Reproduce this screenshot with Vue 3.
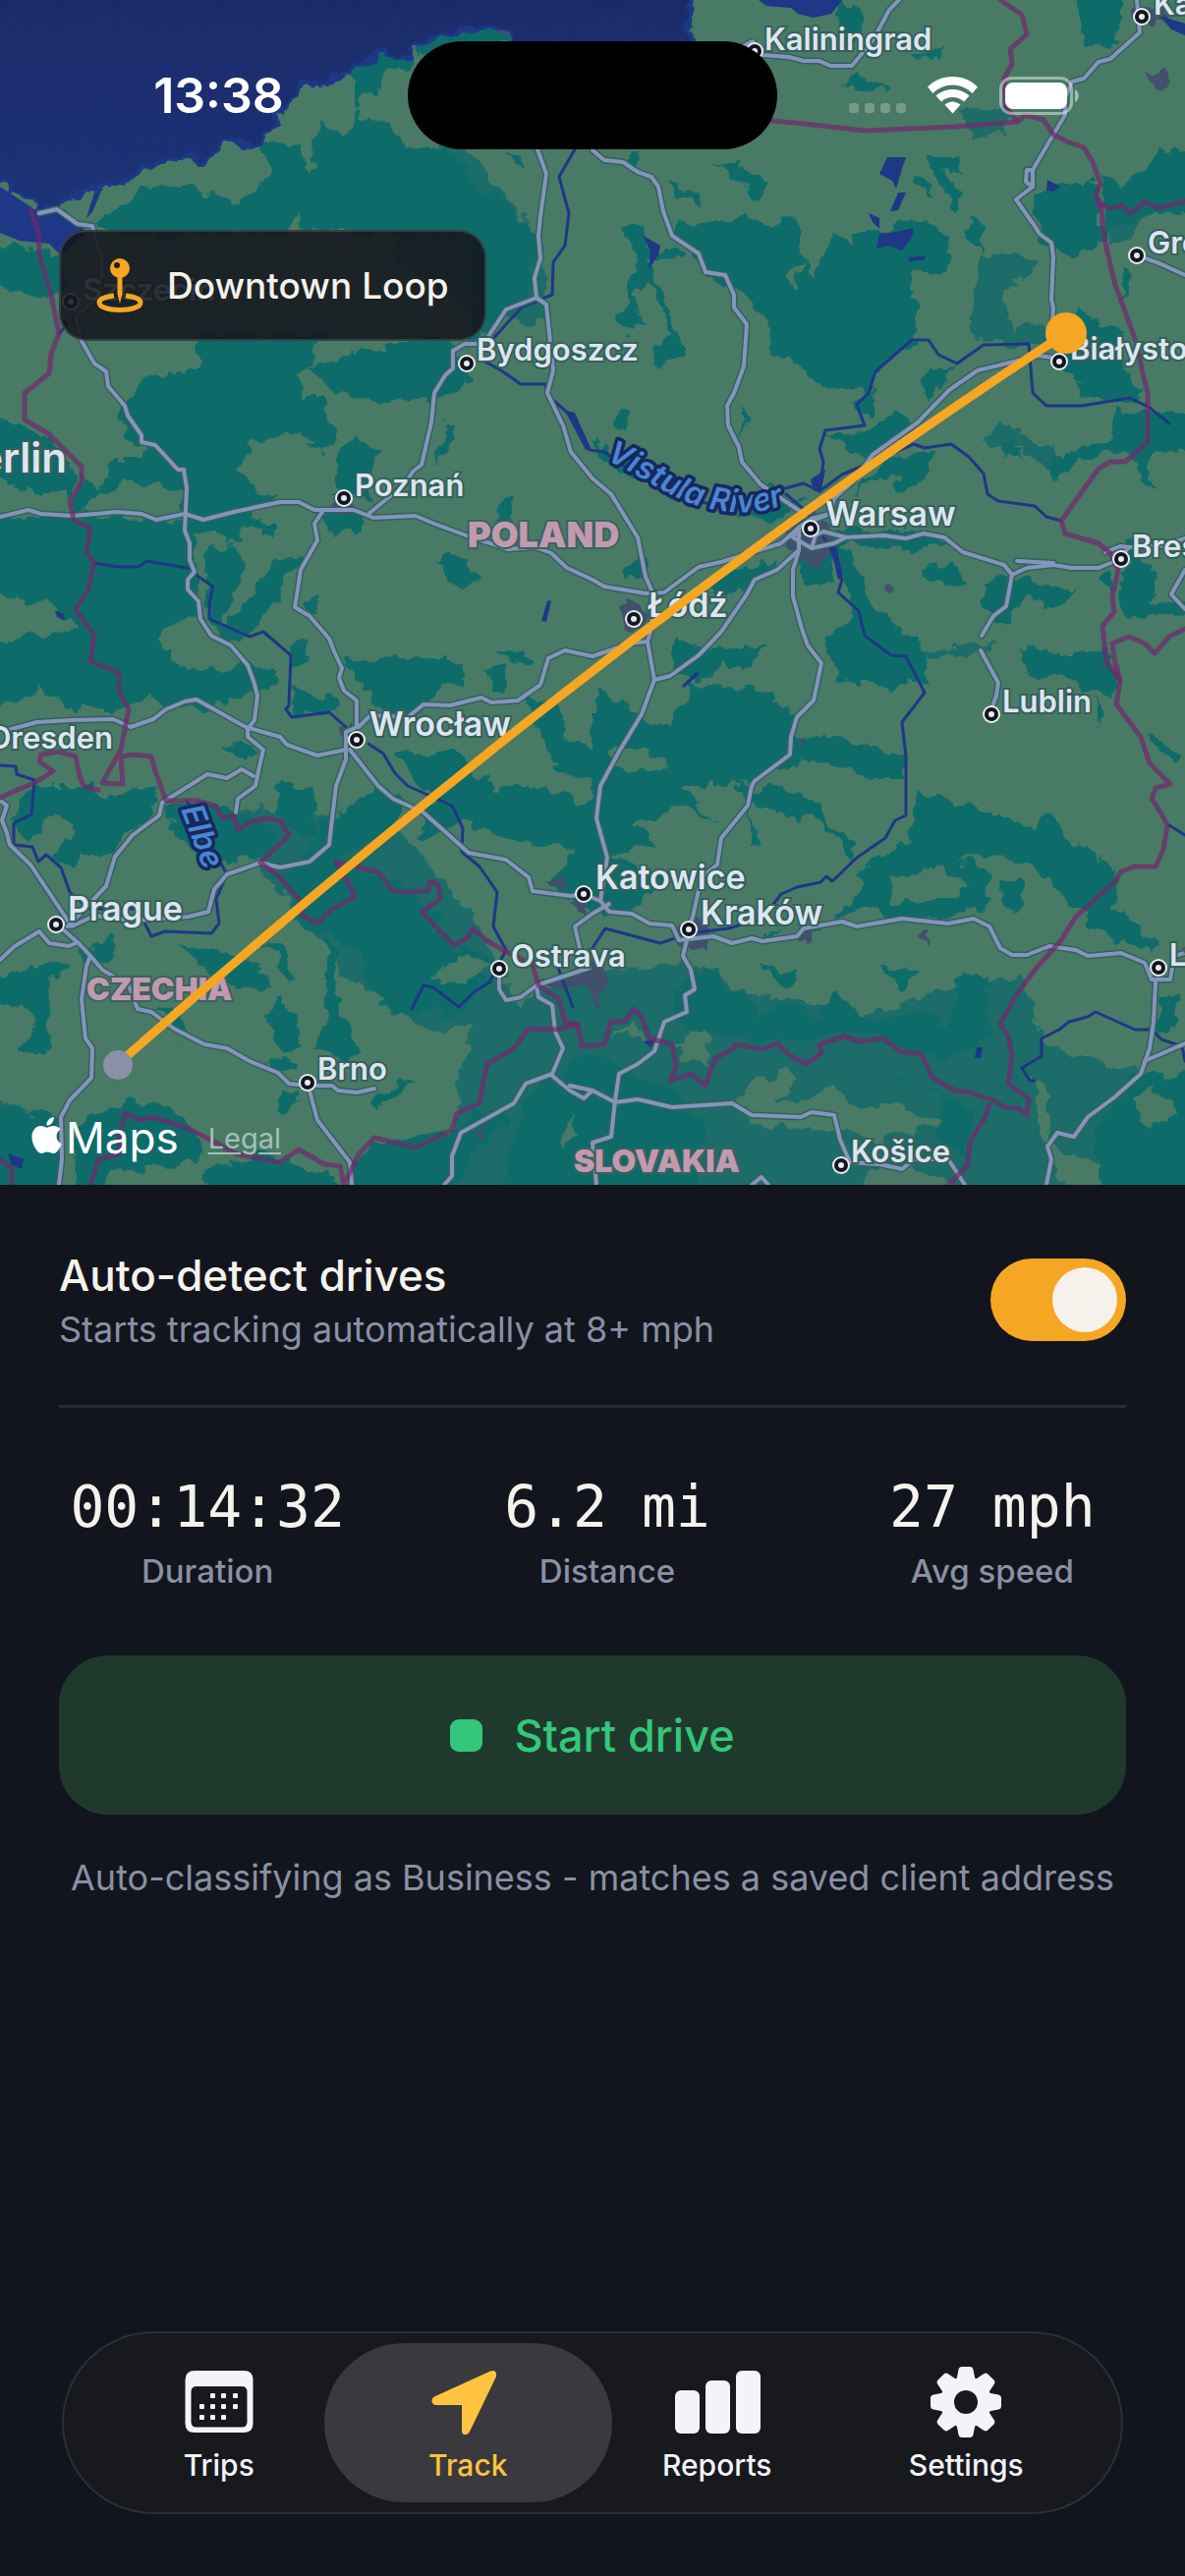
<template>
  <div class="screen">
    <section class="map">
      <svg class="map-canvas" viewBox="0 0 1206 1206" role="img" aria-label="Route map">
        <defs>
          <filter id="rough" filterUnits="userSpaceOnUse" x="-40" y="-40" width="1286" height="1286">
            <feTurbulence type="fractalNoise" baseFrequency="0.05" numOctaves="3" seed="7" />
            <feDisplacementMap in="SourceGraphic" scale="22" xChannelSelector="R" yChannelSelector="G" />
          </filter>
          <linearGradient id="sea" x1="0" y1="0" x2="0" y2="1">
            <stop offset="0" stop-color="#192b68" />
            <stop offset="1" stop-color="#1d3178" />
          </linearGradient>
          <path id="vistula" d="M616 468C650 482 680 506 708 514S770 528 812 508" />
          <path id="elbe" d="M184 824L210 892" />
        </defs>

        <rect width="1206" height="1206" fill="#487a66" />
        <g filter="url(#rough)">
          <polygon v-for="(p, i) in hills" :key="'h' + i" :points="p" fill="#1a6c69" />
          <polygon v-for="(p, i) in forests" :key="'f' + i" :points="p" fill="#0b6c6b" />
          <polygon v-for="(p, i) in clearings" :key="'c' + i" :points="p" fill="#487a66" />
          <polygon v-for="(p, i) in towns" :key="'t' + i" :points="p" fill="#424f6d" />
          <polygon :points="coast" fill="url(#sea)" stroke="#1e3786" stroke-width="5" />
        </g>
        <polygon v-for="(p, i) in lakes" :key="'l' + i" :points="p" fill="#1e3786" />

        <g fill="none" stroke-linejoin="round" stroke-linecap="round">
          <polyline v-for="(p, i) in rivers" :key="'r' + i" :points="p" stroke="#1e3786" stroke-width="3" />
          <polyline v-for="(p, i) in roads" :key="'a' + i" :points="p" stroke="#36605f" stroke-width="7" />
          <polyline v-for="(p, i) in roads" :key="'b' + i" :points="p" stroke="#8495bb" stroke-width="4" />
          <polyline v-for="(p, i) in borders" :key="'d' + i" :points="p" stroke="#73276d" stroke-opacity=".7" stroke-width="5" />
        </g>

        <g v-for="c in cities" :key="c.name">
          <template v-if="c.dot">
            <circle :cx="c.dot[0]" :cy="c.dot[1]" r="9" fill="#e6ebf3" />
            <circle :cx="c.dot[0]" :cy="c.dot[1]" r="7" fill="#14161d" />
            <circle :cx="c.dot[0]" :cy="c.dot[1]" r="3" fill="#e6ebf3" />
          </template>
          <text class="city" :class="c.kind" :x="c.x" :y="c.y">{{ c.name }}</text>
        </g>
        <text v-for="c in countries" :key="c.name" class="country" :class="c.kind" :x="c.x" :y="c.y">{{ c.name }}</text>
        <text class="river"><textPath href="#vistula">Vistula River</textPath></text>
        <text class="river"><textPath href="#elbe">Elbe</textPath></text>

        <path d="M120 1083Q620 642 1085 339" fill="none" stroke="#f5a623" stroke-width="9" />
        <circle cx="120" cy="1084" r="15" fill="#8a90a5" />
        <circle cx="1085" cy="339" r="21" fill="#f5a623" />
      </svg>

      <header class="status">
        <time class="clock">13:38</time>
        <div class="island"></div>
        <div class="signals">
          <svg width="58" height="38" viewBox="0 0 58 38" fill="#fff" fill-opacity=".25">
            <rect v-for="n in 4" :key="n" :x="(n - 1) * 16" y="27" width="10" height="10" rx="3" />
          </svg>
          <svg width="51" height="38" viewBox="0 0 51 38" fill="#fff">
            <path d="M25.500 0C35.500 0 44.500 4 51 10.500L45.500 17C40 11.500 33 8.500 25.500 8.500S11 11.500 5.500 17L0 10.500C6.500 4 15.500 0 25.500 0Z" />
            <path d="M25.500 13C32 13 38 15.500 42.500 19.500L37 25.500C34 22.500 30 21 25.500 21S17 22.500 14 25.500L8.500 19.500C13 15.500 19 13 25.500 13Z" />
            <path d="M25.500 25.500C28.500 25.500 31.500 27 33.500 28.500L25.500 37.500L17.500 28.500C19.500 27 22.500 25.500 25.500 25.500Z" />
          </svg>
          <svg width="82" height="39" viewBox="0 0 82 39">
            <rect x="1.500" y="1.500" width="72" height="36" rx="11" fill="none" stroke="#fff" stroke-opacity=".45" stroke-width="3" />
            <rect x="6" y="6" width="63" height="27" rx="8" fill="#fff" />
            <path d="M77 13c5 2 5 11 0 13z" fill="#fff" fill-opacity=".5" />
          </svg>
        </div>
      </header>

      <div class="chip">
        <svg width="48" height="56" viewBox="0 0 48 56">
          <path d="M18 38C9 39 3 41.500 3 45C3 49.500 12 52.500 24 52.500S45 49.500 45 45C45 41.500 39 39 30 38" fill="none" stroke="#f5a623" stroke-width="5" />
          <path d="M21.500 18h5v18L24 46l-2.500-10z" fill="#f5a623" />
          <circle cx="24" cy="10" r="10" fill="#f5a623" />
          <circle cx="21" cy="7" r="3" fill="#18211f" />
        </svg>
        <span>{{ routeName }}</span>
      </div>

      <footer class="attribution">
        <span class="brand">
          <svg width="31" height="37" viewBox="2 0 20 24" fill="#fff">
            <path d="M12.152 6.896c-.948 0-2.415-1.078-3.960-1.040-2.040.027-3.910 1.183-4.961 3.014-2.117 3.675-.546 9.103 1.519 12.090 1.013 1.454 2.208 3.090 3.792 3.039 1.520-.065 2.090-.987 3.935-.987 1.831 0 2.350.987 3.960.948 1.637-.026 2.676-1.480 3.676-2.948 1.156-1.688 1.636-3.325 1.662-3.415-.039-.013-3.182-1.221-3.220-4.857-.026-3.040 2.480-4.494 2.597-4.559-1.429-2.090-3.623-2.324-4.390-2.376-2-.156-3.675 1.090-4.610 1.090zM15.530 3.830c.843-1.012 1.400-2.427 1.245-3.830-1.207.052-2.662.805-3.532 1.818-.780.896-1.454 2.338-1.273 3.714 1.338.104 2.715-.688 3.559-1.701" />
          </svg>
          Maps
        </span>
        <a href="#legal">Legal</a>
      </footer>
    </section>

    <main class="panel">
      <div class="setting">
        <label for="auto-detect">
          <span class="setting-title">Auto-detect drives</span>
          <span class="setting-hint">Starts tracking automatically at 8+ mph</span>
        </label>
        <input id="auto-detect" v-model="autoDetect" class="switch" type="checkbox" />
      </div>

      <dl class="stats">
        <div v-for="s in stats" :key="s.label" class="stat">
          <dt>{{ s.label }}</dt>
          <dd>{{ s.value }}</dd>
        </div>
      </dl>

      <button class="start" type="button">
        <span class="start-mark"></span>
        Start drive
      </button>
      <p class="note">Auto-classifying as Business - matches a saved client address</p>
    </main>

    <nav class="tabs">
      <button
        v-for="t in tabs"
        :key="t"
        type="button"
        class="tab"
        :class="{ active: t === activeTab }"
        @click="activeTab = t"
      >
        <svg v-if="t === 'Trips'" width="88" height="72" viewBox="0 0 88 72" fill="currentColor">
          <path fill-rule="evenodd" d="M19 4h50q9.500 0 9.500 9.500v44q0 9.500-9.500 9.500h-50q-9.500 0-9.500-9.500v-44q0-9.500 9.500-9.500zM21 20q-5.500 0-5.500 5.500v30.500q0 5.500 5.500 5.500h46q5.500 0 5.500-5.500v-30.500q0-5.500-5.500-5.500z" />
          <rect v-for="d in calendarDots" :key="d.join()" :x="d[0]" :y="d[1]" width="5" height="5" rx="1" />
        </svg>
        <svg v-else-if="t === 'Track'" width="88" height="72" viewBox="3 0 88 72" fill="currentColor">
          <path d="M70 4.500Q77 2 76 10L49 66Q47 70 44 69Q41 69 41 65V39H15Q11 39 10.500 35Q10 32 14 30Z" />
        </svg>
        <svg v-else-if="t === 'Reports'" width="88" height="72" viewBox="0 0 88 72" fill="currentColor">
          <rect x="1" y="24" width="25" height="44" rx="6" />
          <rect x="32" y="14" width="25" height="54" rx="6" />
          <rect x="63" y="4" width="25" height="64" rx="6" />
        </svg>
        <svg v-else width="88" height="72" viewBox="-8 0 88 72" fill="currentColor">
          <circle cx="36" cy="36" r="19" fill="none" stroke="currentColor" stroke-width="14" />
          <path
            v-for="n in 8"
            :key="n"
            d="M32 0h8q3 0 3.500 3l2 10h-19l2-10q.5-3 3.500-3z"
            :transform="`rotate(${n * 45} 36 36)`"
          />
        </svg>
        <span>{{ t }}</span>
      </button>
    </nav>
  </div>
</template>

<script setup>
import { ref } from 'vue'

const routeName = ref('Downtown Loop')
const autoDetect = ref(true)
const activeTab = ref('Track')

const tabs = ['Trips', 'Track', 'Reports', 'Settings']

const stats = ref([
  { label: 'Duration', value: '00:14:32' },
  { label: 'Distance', value: '6.2 mi' },
  { label: 'Avg speed', value: '27 mph' }
])

const calendarDots = [
  [35, 27], [46, 27], [58, 27],
  [24, 38], [35, 38], [46, 38], [58, 38],
  [24, 49], [35, 49], [46, 49]
]

// map labels, in map units
const cities = [
  { name: 'Kaliningrad', dot: [768, 52], x: 778, y: 51 },
  { name: 'Kaunas', dot: [1162, 17], x: 1174, y: 15 },
  { name: 'Grodno', dot: [1157, 260], x: 1168, y: 258 },
  { name: 'Białystok', dot: [1078, 368], x: 1089, y: 366 },
  { name: 'Bydgoszcz', dot: [475, 370], x: 485, y: 367 },
  { name: 'Szczecin', dot: [72, 307], x: 84, y: 306 },
  { name: 'Poznań', dot: [350, 507], x: 361, y: 505 },
  { name: 'Warsaw', dot: [825, 538], x: 840, y: 535, kind: 'large' },
  { name: 'Łódź', dot: [645, 630], x: 659, y: 628, kind: 'large' },
  { name: 'Lublin', dot: [1009, 727], x: 1020, y: 725 },
  { name: 'Brest', dot: [1141, 569], x: 1152, y: 567 },
  { name: 'Wrocław', dot: [363, 753], x: 376, y: 749, kind: 'large' },
  { name: 'Prague', dot: [57, 941], x: 69, y: 937, kind: 'large' },
  { name: 'Brno', dot: [313, 1102], x: 323, y: 1099 },
  { name: 'Katowice', dot: [594, 910], x: 606, y: 905, kind: 'large' },
  { name: 'Kraków', dot: [701, 946], x: 713, y: 941, kind: 'large' },
  { name: 'Ostrava', dot: [508, 986], x: 520, y: 984 },
  { name: 'Košice', dot: [856, 1186], x: 866, y: 1183 },
  { name: 'Lviv', dot: [1179, 985], x: 1190, y: 983 },
  { name: 'Dresden', x: 115, y: 762, kind: 'end' },
  { name: 'Berlin', x: 68, y: 481, kind: 'capital' }
]

const countries = [
  { name: 'POLAND', x: 476, y: 557, kind: 'large' },
  { name: 'CZECHIA', x: 88, y: 1018 },
  { name: 'SLOVAKIA', x: 584, y: 1193 }
]

const coast = '-40,-40 706,-40 705,3 702,25 707,60 526,60 526,42 519,30 469,30 427,43 419,60 404,60 392,50 369,67 350,78 308,88 288,110 269,133 265,145 242,144 204,160 158,167 127,182 94,193 65,207 40,217 35,213 23,197 -40,170'

const lakes = [
  '0,190 35,213 40,216 65,213 84,230 86,238 62,260 50,248 20,245 0,237',
  '772,0 857,0 846,14 828,18 812,14 805,8 780,6',
  '96,196 104,192 94,216 88,222',
  '903,160 922,160 918,172 912,192 908,184 895,177',
  '895,238 912,236 930,232 928,242 918,255 905,250 892,253',
  '884,217 895,222 895,233 888,226',
  '914,196 922,196 914,214 906,215',
  '925,262 942,260 940,265 930,265 925,267',
  '655,240 672,250 670,260 660,274 662,258',
  '1066,183 1079,190 1072,195 1065,194',
  '1180,16 1206,24 1206,36 1192,30',
  '557,612 561,611 556,633 551,632',
  '708,684 712,686 696,700 694,698',
  '56,621 65,625 66,632 58,628',
  '655,1060 668,1058 662,1066',
  '994,1066 1000,1066 998,1077 992,1077',
  '8,1174 24,1180 22,1190 12,1186',
  '845,553 850,550 858,588 853,590',
  '825,488 840,478 836,498 828,500',
  '575,418 585,420 602,458 596,458'
]

const hills = [
  '999,260 1030,257 1057,267 1022,297 1026,327 1065,333 1065,350 995,350 991,303',
  '410,160 470,140 500,190 545,230 560,330 480,320 400,260',
  '976,113 1030,108 1026,137 991,140',
  '1141,190 1240,160 1240,225 1180,215 1130,250',
  '240,820 400,840 480,930 540,1040 440,1050 370,1010 300,930 265,880',
  '481,1040 603,990 700,980 760,1010 880,1030 1040,990 1060,1060 1240,1120 1240,1240 360,1240 385,1163 458,1153',
  '-30,1110 40,1135 60,1240 -30,1240',
  '1020,430 1070,455 1090,480 1060,475 1030,450 1003,450',
  '930,665 1010,655 1000,668 940,668'
]

const forests = [
  '362,80 362,127 346,135 323,127 315,173 304,150 265,143 277,170 242,210 231,200 173,203 173,240 235,235 290,240 305,215 312,235 481,240 540,228 504,200 485,197 469,167 454,153 415,153 400,123 369,120 362,110 388,87 392,70 419,67 427,43 392,50 369,67 354,78',
  '469,30 519,28 526,45 470,45 430,60 427,43',
  '480,230 542,228 546,267 535,300 500,333 480,350',
  '140,195 190,190 225,200 170,240 110,235 95,225',
  '-30,237 62,260 75,290 38,307 -30,270',
  '200,340 335,340 300,380 308,400 323,400 327,423 346,443 342,457 277,450 246,463 238,477 258,497 285,510 250,520 270,527 270,533 190,545 185,500 130,490 77,523 80,480 100,500 110,470 140,470 150,455 115,430 140,395 160,383 200,375',
  '310,370 380,355 450,345 480,370 470,400 400,410 340,400',
  '-30,420 25,430 75,475 70,510 60,500 40,505 20,500 -30,460',
  '77,523 -30,527 -30,600 50,613 80,640 30,650 -30,655 -30,726 25,715 40,697 58,713 70,722 127,722 150,707 173,722 215,720 254,710 277,697 281,683 250,677 200,683 165,660 165,640 207,630 200,580 193,535',
  '208,560 240,557 250,580 225,633 240,630 270,585 280,570 312,563 290,590 287,605 265,635 245,650 225,655 210,600',
  '225,540 245,535 248,553 232,555',
  '266,530 280,530 280,548 268,546',
  '327,523 365,520 370,537 340,547',
  '365,443 388,463 372,490 382,510 345,500 344,462',
  '455,430 465,430 455,460 440,470',
  '515,505 525,505 520,525 505,535',
  '446,567 475,567 478,583 490,593 465,595',
  '312,610 326,605 322,625 314,622',
  '296,657 314,657 312,672 298,680',
  '350,673 450,670 470,680 468,693 450,700 425,732 400,725 390,740 375,700 360,695',
  '296,695 318,708 345,710 348,722 320,725 298,722',
  '500,660 543,670 538,677 515,675',
  '496,680 515,680 515,700 500,697',
  '535,710 569,715 573,750 603,763 620,800 570,785 550,755',
  '415,767 460,765 480,785 520,810 440,810 400,770',
  '227,760 246,755 262,763 250,775',
  '691,230 726,227 738,233 757,217 784,233 791,217 811,223 813,253 830,283 849,233 865,253 868,237 891,237 922,223 949,230 966,240 965,277 930,277 930,333 934,347 911,360 891,377 884,400 834,393 811,367 788,360 784,330 757,300 741,287 718,280 711,260 688,240',
  '1057,193 1076,187 1118,187 1118,230 1130,240 1091,262 1072,250 1057,240 1049,213',
  '1122,173 1141,190 1180,150 1240,165 1240,225 1180,215 1145,228 1126,245',
  '1141,270 1153,283 1145,310',
  '1091,-30 1141,-30 1141,30 1130,53 1103,43',
  '988,223 999,230 999,257 982,240',
  '726,167 757,167 780,193 765,203 749,180',
  '680,183 707,193 715,210 695,200',
  '634,233 653,227 657,253 699,257 695,262 661,267 695,347 695,367 666,373 668,347 684,343 661,283 645,300 657,333 641,340 626,323 638,300 650,270',
  '849,3 872,3 880,20 868,53 853,30',
  '947,160 972,160 978,177 961,177 980,200 974,213 947,175',
  '935,178 945,190 955,205 935,192',
  '857,83 888,78 907,93 872,90',
  '930,55 958,45 956,62',
  '520,155 532,160 530,172 522,168',
  '640,155 652,155 650,175 642,172',
  '945,370 970,375 955,400 940,410',
  '1080,350 1095,310 1115,327 1141,337 1145,370 1150,400 1115,390 1080,377',
  '1095,385 1160,395 1160,410 1100,405',
  '749,527 776,497 818,510 784,533',
  '600,450 640,470 700,500 690,505 640,490',
  '841,440 872,443 922,420 926,440 888,467 872,463',
  '868,410 890,395 888,420 875,425',
  '934,460 953,460 949,480 918,503 911,483 895,487 872,500 900,470',
  '830,540 934,540 965,550 922,560 857,553 872,587 895,620 945,670 941,693 895,700 853,690 838,653 868,630 865,600 849,567 849,597 815,593 815,567',
  '938,580 972,577 988,590 976,597 949,593',
  '1003,593 1045,587 1068,597 1095,597 1076,617 1041,613 1018,633 999,617',
  '1134,417 1195,420 1240,433 1240,457 1176,460 1168,487 1176,500 1161,490 1157,467 1130,460 1099,463 1072,490 1072,467 1134,443',
  '1020,450 1030,447 1041,463 1022,467',
  '1038,660 1049,663 1130,663 1141,690 1134,707 1103,703 1084,690 1057,690 1041,677',
  '1118,587 1130,583 1130,607',
  '1149,550 1180,587 1165,610 1240,613 1240,630 1150,627 1138,613',
  '1115,710 1125,725 1118,740',
  '1168,743 1199,770 1195,775 1172,757',
  '688,653 726,663 780,655 757,683 734,677 718,690 691,690',
  '630,575 660,570 655,590 635,590',
  '730,580 790,575 765,600 730,605',
  '603,700 641,720 665,737 684,737 703,695 735,700 757,697 800,720 811,747 868,753 922,773 918,787 872,787 818,770 795,787 749,800 603,800',
  '626,417 641,417 643,430 634,440',
  '752,413 766,426 758,438',
  '35,800 92,800 100,810 161,800 154,833 127,850 115,867 81,867 77,883 38,867 20,850 10,830',
  '169,817 215,817 265,833 285,853 265,877 215,880 192,867 173,830',
  '277,800 319,800 323,817 319,853 292,843',
  '385,800 415,820 400,843 342,877 385,890 423,910 450,933 442,953 504,977 481,987 500,1000 462,1033 431,1030 404,1033 369,1000 365,967 342,953 315,947 290,905 277,885 300,890 327,840',
  '446,800 538,800 603,820 603,867 538,857 473,837 427,853 435,830',
  '331,953 342,970 346,1030 365,1070 350,1078 320,1070 331,1033',
  '288,1013 304,1040 308,1070 281,1063 265,1033',
  '270,955 288,965 302,1000 290,990',
  '185,963 258,977 277,1010 254,1007 215,993',
  '23,987 65,977 54,1000 46,1073 19,1073 35,1050 31,1027 -30,1013 -30,1000',
  '80,965 115,955 110,975 90,985',
  '160,1030 175,1020 195,1045 185,1060',
  '265,1082 290,1072 306,1090 280,1092',
  '284,1110 304,1107 300,1123 286,1130',
  '408,1100 423,1100 385,1127 377,1120',
  '-30,1120 31,1133 62,1140 60,1240 -30,1240',
  '96,1133 127,1120 154,1123 185,1133 208,1163 200,1183 115,1195 92,1240 75,1240 77,1150',
  '210,1190 260,1175 340,1195 345,1240 200,1240',
  '365,1240 358,1183 385,1163 458,1153 490,1130 520,1140 480,1170 450,1240',
  '540,1110 600,1070 680,1110 720,1150 700,1240 500,1240',
  '603,800 690,800 730,837 700,820 641,840 672,860 622,870 676,893 665,910 641,930 603,930 560,900 585,860',
  '745,800 788,800 834,813 834,830 872,860 868,873 834,837 776,823',
  '764,827 776,860 764,862',
  '934,807 988,823 1022,833 1045,840 1072,830 1088,853 1111,867 1138,893 1134,923 1180,960 1172,970 1130,957 1103,933 1065,893 1030,873 972,877 1007,887 1003,923 976,933 922,937 888,927 872,927 849,933 880,900 872,887 930,853 934,833',
  '1016,897 1045,897 1042,920 1030,933 1018,915',
  '768,983 811,990 805,1007 788,997',
  '895,983 934,990 918,1010',
  '1180,1013 1199,1013 1199,1047 1176,1050',
  '780,950 800,943 780,960',
  '680,1010 715,987 738,1007 765,1013 768,1040 791,1020 834,1037 849,1010 872,1027 891,1043 911,1033 938,1027 968,1050 972,997 1003,990 1010,1050 960,1080 880,1050 790,1060 700,1050',
  '900,1090 990,1130 985,1180 950,1160 960,1120',
  '1115,1150 1160,1090 1240,1100 1240,1240 1120,1240'
]

const clearings = [
  '745,1117 800,1087 811,1100 788,1120 825,1120 849,1100 870,1130 900,1125 960,1140 930,1155 895,1160 840,1147 765,1145',
  '818,1240 903,1187 968,1200 968,1240',
  '1050,1090 1072,1120 1065,1160 1118,1187 1118,1240 1076,1200 1057,1150',
  '903,890 960,880 988,900 965,917 910,917',
  '1152,1120 1175,1105 1200,1135 1165,1150',
  '622,1060 645,1043 658,1060 640,1055',
  '690,1060 722,1050 720,1085 690,1080',
  '570,1155 585,1135 580,1160 572,1170',
  '620,765 660,765 680,780 640,790',
  '820,265 800,280 806,292 812,280',
  '210,660 190,650 170,655 175,675 205,680',
  '20,870 60,825 75,835 60,870 40,880',
  '250,450 300,440 320,450 270,470',
  '1025,300 1055,295 1060,315 1030,335',
  '440,1000 470,970 500,985 470,1000'
]

const towns = [
  '800,540 830,520 850,545 845,560 838,575 820,572 800,555',
  '335,505 360,500 362,518 350,525 336,517',
  '637,608 655,610 655,635 640,645 633,622',
  '345,735 358,738 362,752 348,748',
  '690,938 715,935 722,962 705,968 688,955',
  '555,898 572,892 578,902 560,906',
  '545,1005 580,985 605,975 620,1000 612,1028 600,1005 570,1010',
  '581,920 600,915 595,940',
  '815,950 835,945 830,957 815,958',
  '937,950 950,950 948,962 942,957',
  '480,1150 495,1140 485,1158',
  '899,597 912,600 903,604',
  '810,752 825,743 818,755',
  '1170,72 1186,72 1184,95 1172,92',
  '1155,10 1190,8 1175,25 1160,25',
  '502,32 520,32 515,42'
]

const rivers = [
  '585,152 569,180 579,217 575,250 563,267 562,300 532,312 515,330 500,347',
  '488,365 510,377 530,391 555,391 558,403 581,423 600,458 615,460 650,485 700,507 722,513',
  '800,503 820,520 845,557 857,590 853,603 874,622 880,647 907,667 922,668 941,705 918,735 922,770 922,830 911,835 901,853 872,873 847,897 841,892 835,898 811,903 795,910 776,935 741,945 701,950 672,960 616,945 603,965',
  '795,498 818,492 834,500 857,483 895,467 930,452 941,456 968,452 986,465 1001,482 1005,503 1016,510 1053,515 1065,526 1080,530',
  '834,500 838,470 834,457 840,438 880,433 872,412 884,400 891,378 928,346 945,346 955,361 974,370 1001,351 1047,350 1049,375 1051,400 1065,413 1101,413 1150,405 1170,415 1190,431',
  '96,573 119,577 141,577 150,571 195,579 202,587 217,597 213,614 213,630 254,648 268,643 296,667 294,718 291,722 297,730 335,725 352,740',
  '375,757 390,767 402,787 415,800 460,820 471,843 470,867 488,882 506,908 502,943 515,967 498,1000 482,1010 467,1025 441,1005 431,1003 419,1027',
  '0,779 16,780 17,788 35,794 32,829 14,838 14,860 33,862 39,877 47,870 62,883 71,908 90,925 140,925 154,953 168,948 215,950 223,940 220,915 231,890 190,815',
  '60,340 68,330 62,325',
  '1053,1100 1048,1100 1040,1087 1060,1075 1060,1057 1078,1048 1088,1040 1107,1035 1115,1030 1155,1048 1172,1048 1182,1058 1203,1065 1206,1080',
  '1190,840 1206,850',
  '566,980 583,1025'
]

const roads = [
  '40,217 58,213 79,228 94,230 100,253 104,263 102,300 77,323 83,347 96,370 108,378 110,393 127,413 130,423 144,443 144,450 158,453 181,478 187,478 190,497 188,540 193,553 193,570 198,582 191,590 191,600 202,612 204,630 215,647 235,657 252,677 258,693 262,708 259,733 252,742 252,750 268,763 264,780 260,800 242,813 240,827',
  '0,526 29,519 42,523 75,525 119,521 144,523 159,529 188,523 207,529 238,521 285,511 304,511 320,519 360,519 380,527 423,525 442,533 477,546 517,559 545,557 561,563 577,578 603,590 615,597 657,604 676,603 711,577 734,572 795,553 813,537 826,528 845,523',
  '375,523 412,493 420,480 429,473 436,443 439,430 442,400 453,382 461,375 461,357 473,350 492,350 515,315 546,303 544,283 550,263 548,240 550,220 556,177 547,152',
  '546,303 556,310 563,377 557,400 573,433 581,460 603,487 622,503 649,547 657,587 664,603 663,640 659,653 666,692 653,727 630,765 611,800 607,833 618,873 611,917 620,928 643,930 661,940 684,942 691,957 726,953 745,960 765,955 776,958 811,953 818,945 857,938 872,943 918,935 965,940 991,935 1007,943 1018,965 1030,972 1045,972 1068,963 1095,967 1107,973 1141,970 1165,980 1172,997 1191,997 1195,973 1206,970',
  '603,153 615,163 634,165 649,175 663,180 670,190 675,215 684,240 711,258 718,277 738,280 747,300 747,313 760,330 757,373 747,400 740,413 741,433 752,455 755,470 774,493 818,523',
  '1157,0 1160,33 1130,60 1118,63 1103,80 1091,83 1084,100 1084,117 1072,137 1051,173 1045,173 1044,185 1051,190 1034,203 1053,230 1058,238 1070,247 1072,262 1070,305 1072,313 1070,340',
  '1051,173 1051,190',
  '1078,365 1057,362 995,377 966,397 934,430 888,463 868,490 849,507 845,523 826,530',
  '768,52 758,46 766,42 776,56 803,58 818,62 834,62 845,67 867,67 889,40 905,10 915,0',
  '813,537 807,547 826,558 849,553 861,547 899,545 922,548 940,543 961,547 980,562 1022,575 1030,585 1045,578 1072,575 1090,578 1118,578 1138,570 1149,557 1140,556 1125,562',
  '826,558 830,545 838,541 861,547',
  '1149,557 1180,556 1206,548',
  '1035,571 1072,573',
  '1030,585 1024,617 1011,627 999,647',
  '998,662 1016,695 1014,708 1009,722',
  '813,560 807,580 807,607 816,640 822,657 836,675 828,713 811,730 805,750 804,768 768,795 765,800 761,820 734,853 730,880 714,893 705,933 701,945',
  '813,537 813,560 791,580 768,590 760,605 734,643 711,667 682,688 666,692',
  '699,957 695,973 703,987 707,1007 697,1013 699,1030 676,1040 666,1070 649,1083 630,1093 626,1120 622,1157 603,1163 607,1206',
  '580,1105 603,1110 626,1122 649,1119 684,1127 745,1123 765,1135 815,1137 826,1132 849,1135 855,1160 865,1183 895,1185 918,1190 930,1180 965,1180 975,1195 982,1206',
  '1176,1000 1174,1040 1170,1067 1161,1093 1134,1117 1107,1137 1093,1157 1076,1153 1066,1167 1070,1180 1065,1206',
  '1165,1080 1188,1070 1206,1062',
  '328,521 320,533 323,550 306,580 303,600 300,618 315,627 335,650 340,663 348,680 345,690 350,703 363,713 363,740 352,745 352,773 342,800 338,833 335,860 315,877 285,883 265,878 231,890 218,905 212,928 192,933 135,937 96,932 73,943',
  '365,740 377,728 415,730 431,717 458,718 490,710 500,715 527,713 550,697 558,670 575,662 603,668 641,655 659,653',
  '8,743 38,735 73,733 115,732 133,740 156,732 169,722 188,714 200,712 250,740 285,750 292,758 323,769 352,763',
  '356,763 385,800 400,813 431,827 477,868 515,875 538,893 542,907 581,912 594,910 611,917',
  '69,943 108,902 117,872 135,850 162,830 165,817 192,800 211,788 231,792 246,783 258,790',
  '0,815 7,820 2,835 7,848 10,860 31,880 69,937',
  '0,977 15,963 40,948 50,960 70,963 77,960',
  '65,947 80,960 92,973 104,987 131,1003 140,1027 154,1030 177,1047 208,1063 231,1067 254,1080 283,1092 294,1103 313,1105 338,1105 344,1110 363,1112 381,1108',
  '315,1110 323,1140 356,1183 358,1206',
  '92,973 88,983 83,1017 87,1057 94,1067 93,1097 71,1120 62,1137 63,1180 60,1206',
  '508,990 508,1007 515,1018 530,1015 546,1003 570,995 600,985',
  '546,1003 548,1015 562,1023 565,1050 573,1067 562,1093 535,1103 523,1123 469,1153 460,1177 460,1197 452,1206',
  '562,1095 580,1110 594,1118 603,1110',
  '590,965 585,943 603,930 620,920',
  '1157,260 1180,268 1206,280',
  '1206,580 1192,605 1206,620',
  '765,1206 775,1198 782,1206'
]

const borders = [
  '31,213 40,240 40,260 52,300 60,340 52,360 50,380 25,400 25,427 50,442 83,475 83,490 71,510 75,530 92,538 88,563 96,573 90,600 77,620 96,647 92,673 121,685 121,703 131,722 123,763 104,797 125,798 123,770 135,768 154,770 158,785 169,815 200,815 219,820 227,833 238,830 242,845 252,838 269,833 285,835 294,850 265,878 284,892 308,920 308,932 323,940 338,925 361,913 355,900 342,877 385,888 400,907 412,908 435,907 438,897 446,900 448,915 429,928 445,945 462,962 475,955 481,945 495,957 512,967 542,982 548,1003 569,1017 575,1040 588,1043 592,1065 615,1063 622,1040 635,1040 645,1027 653,1035 661,1057 684,1063 688,1085 682,1100 703,1093 718,1105 724,1087 728,1077 747,1067 748,1063 776,1068 791,1062 805,1075 820,1083 836,1072 834,1063 859,1055 875,1060 899,1057 915,1070 938,1073 949,1097 972,1110 988,1112 1011,1120 1022,1127 1036,1128 1045,1135 1047,1118 1038,1112 1026,1103 1030,1073 1026,1055 1018,1042 1034,1013 1055,985 1080,957 1095,933 1135,897 1141,887 1155,882 1176,882 1184,865 1188,840 1182,828 1172,813 1176,802 1191,798 1170,777 1161,750 1136,717 1140,693 1126,673 1122,637 1134,623 1132,607 1138,580 1130,563 1118,553 1084,543 1080,530 1118,477 1130,470 1145,470 1168,450 1168,400 1163,380 1157,350 1134,287 1124,243 1120,205 1115,200 1120,187 1112,165 1103,150 1088,145 1072,137 1062,122 1043,117 1036,124 972,129 880,133 818,126 786,123',
  '1117,207 1130,212 1141,209 1151,217 1165,205 1178,212 1206,205',
  '1018,0 1040,15 1045,35 1028,50 1030,65 1022,80 1024,110 1034,122',
  '1140,693 1134,670 1132,655 1149,648 1165,655 1175,665 1190,648 1206,640',
  '588,1043 565,1048 538,1047 523,1067 496,1083 492,1100 488,1123 465,1133 460,1150 440,1160 423,1168 381,1158 365,1175 350,1206 346,1187 330,1185 304,1170 285,1183 242,1175 208,1157 190,1148 165,1140 154,1137 142,1140 127,1133 121,1160 121,1175 100,1180 92,1206',
  '100,804 85,800 81,790 77,770 60,765 42,768 40,775 54,785 35,797 20,803 0,812',
  '0,1180 12,1190 12,1206',
  '1007,1125 1001,1140 988,1160 984,1187 965,1206'
]
</script>

<style>
body {
  margin: 0;
  background: #12151d;
}
</style>

<style scoped>
.screen {
  display: flex;
  flex-direction: column;
  min-height: 100vh;
  background: #12151d;
  color: #f5f2eb;
  font-family: Inter, "Liberation Sans", sans-serif;
}

button {
  border: 0;
  font-family: inherit;
}

/* map */
.map {
  position: relative;
}

.map-canvas {
  display: block;
  width: 100%;
  height: auto;
}

.city {
  fill: #dde5f1;
  stroke: #36605a;
  stroke-width: 4px;
  paint-order: stroke;
  font-size: 31px;
  font-weight: 600;
}

.city.large {
  font-size: 34px;
}

.city.end {
  text-anchor: end;
}

.city.capital {
  font-size: 42px;
  text-anchor: end;
}

.country {
  fill: #c29ab0;
  stroke: #3d6260;
  stroke-width: 4px;
  paint-order: stroke;
  font-size: 32px;
  font-weight: 900;
}

.country.large {
  font-size: 36px;
}

.river {
  fill: #4a86d2;
  stroke: #17285f;
  stroke-width: 7px;
  stroke-linejoin: round;
  paint-order: stroke;
  font-size: 32px;
  font-style: italic;
  font-weight: 600;
}

.status {
  position: absolute;
  top: 42px;
  left: 0;
  right: 0;
  display: grid;
  grid-template-columns: 1fr 376px 1fr;
  align-items: center;
  height: 110px;
  color: #fff;
}

.clock {
  padding-left: 30px;
  text-align: center;
  font-size: 50px;
  font-weight: 600;
}

.island {
  height: 110px;
  border-radius: 55px;
  background: #000;
}

.signals {
  display: flex;
  justify-content: flex-end;
  gap: 22px;
  padding-right: 107px;
}

.chip {
  position: absolute;
  top: 234px;
  left: 60px;
  display: flex;
  align-items: center;
  gap: 24px;
  height: 109px;
  padding: 0 36px;
  border: 2px solid rgba(70, 74, 80, 0.7);
  border-radius: 28px;
  background: rgba(20, 23, 30, 0.88);
  font-size: 37px;
  font-weight: 500;
}

.attribution {
  position: absolute;
  left: 32px;
  bottom: 20px;
  display: flex;
  align-items: center;
  gap: 30px;
}

.brand {
  display: flex;
  align-items: baseline;
  gap: 4px;
  color: #fff;
  font-size: 44px;
  line-height: 56px;
}

.attribution a {
  color: #a5c0b4;
  font-size: 29px;
  text-underline-offset: 4px;
}

/* drive panel */
.panel {
  padding: 62px 60px;
}

.setting {
  display: flex;
  align-items: center;
  justify-content: space-between;
  padding-bottom: 52px;
  border-bottom: 3px solid #282b33;
}

.setting-title,
.setting-hint {
  display: block;
}

.setting-title {
  font-size: 44px;
  font-weight: 500;
  line-height: 60px;
}

.setting-hint {
  color: #8a90a5;
  font-size: 36px;
  line-height: 50px;
}

.switch {
  appearance: none;
  width: 138px;
  height: 84px;
  margin: 0;
  padding: 9px;
  border-radius: 42px;
  background: #3a3d46;
}

.switch::before {
  content: "";
  display: block;
  width: 66px;
  height: 66px;
  border-radius: 50%;
  background: #f5f2eb;
}

.switch:checked {
  background: #f5a623;
}

.switch:checked::before {
  margin-left: auto;
}

.stats {
  display: grid;
  grid-template-columns: 302fr 511fr 272fr;
  margin: 64px 0 58px;
}

.stat {
  display: flex;
  flex-direction: column-reverse;
  text-align: center;
}

.stat dd {
  margin: 0;
  font-family: "DejaVu Sans Mono", "Liberation Mono", monospace;
  font-size: 58px;
  line-height: 74px;
}

.stat dt {
  color: #8a90a5;
  font-size: 33px;
  font-weight: 500;
  line-height: 56px;
}

.start {
  display: flex;
  align-items: center;
  justify-content: center;
  gap: 32px;
  width: 100%;
  height: 162px;
  border-radius: 50px;
  background: #1f3a2d;
  color: #34c77b;
  font-size: 45px;
  font-weight: 500;
}

.start-mark {
  width: 33px;
  height: 33px;
  border-radius: 9px;
  background: currentColor;
}

.note {
  margin: 40px 0 0;
  color: #8a90a5;
  font-size: 36px;
  line-height: 48px;
  text-align: center;
}

/* tab bar */
.tabs {
  display: grid;
  grid-template-columns: repeat(4, 1fr);
  margin: auto 63px 63px;
  padding: 10px 31px;
  border: 2px solid #2a2f3b;
  border-radius: 93px;
  background: #18191d;
}

.tab {
  display: flex;
  flex-direction: column;
  align-items: center;
  gap: 8px;
  height: 162px;
  margin: 0 -20px;
  padding: 24px 0 0;
  border-radius: 81px;
  background: none;
  color: #f3f4fa;
  font-size: 30px;
  font-weight: 500;
  line-height: 40px;
}

.tab.active {
  background: #39393e;
  color: #ffc340;
}
</style>
